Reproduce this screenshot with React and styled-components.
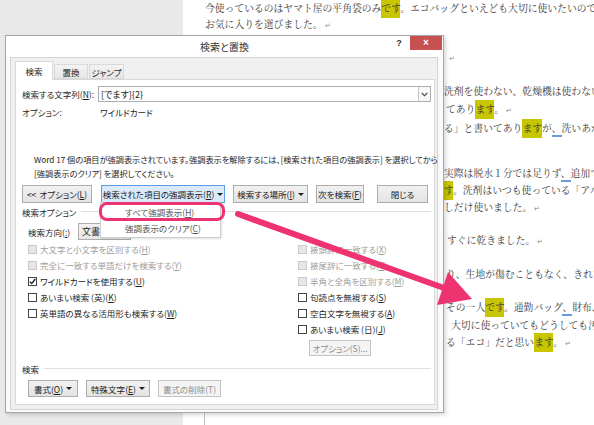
import React from "react";
import styled, { createGlobalStyle } from "styled-components";

const GlobalStyle = createGlobalStyle`
  html, body { margin: 0; padding: 0; width: 594px; height: 425px; overflow: hidden; }
  body { font-family: "Noto Sans CJK JP", "Noto Sans", sans-serif; }
  * { box-sizing: border-box; }
`;

const PINK = "#ee3470";

const Screen = styled.div`
  position: relative;
  width: 594px;
  height: 425px;
  overflow: hidden;
  display: flex;
  background: #e9e9e9;
`;

const Workspace = styled.div`
  width: 183px;
  flex-shrink: 0;
  background: #e9e9e9;
`;

const Page = styled.div`
  position: relative;
  flex: 1;
  min-width: 0;
  overflow: hidden;
  background: #fff;
  padding-left: 22px;
  font-family: "Noto Serif CJK JP", "Noto Sans CJK JP", serif;
  font-size: 9.8px;
  color: #3a3a3a;
  &::after {
    content: "";
    position: absolute;
    left: 21px;
    bottom: 0;
    height: 12px;
    border-left: 1px solid #c4c4c4;
  }
`;

const DocLine = styled.div`
  height: 16px;
  line-height: 16px;
  white-space: nowrap;
  margin-left: ${(p) => p.$indent || 0}px;
  margin-top: ${(p) => p.$gap || 0}px;
`;

const Mark = styled.span`
  background: #c8c600;
  color: #333;
  padding: 2px 0 3px;
`;

const Wavy = styled.span`
  border-bottom: 2px solid #6a9be0;
`;

const Para = styled.span`
  font-size: 7px;
  color: #8a8a8a;
  margin-left: 2px;
`;

const Dialog = styled.div`
  position: absolute;
  left: 5px;
  top: 35px;
  width: 439px;
  height: 378px;
  background: #fafafa;
  border: 1px solid #a6a6a6;
  box-shadow: 2px 2px 4px rgba(0, 0, 0, 0.16);
  display: flex;
  flex-direction: column;
  font-family: "Noto Sans CJK JP", sans-serif;
  font-size: 8.5px;
  font-feature-settings: "palt";
  color: #1e1e1e;
`;

const TitleBar = styled.div`
  height: 21px;
  display: grid;
  grid-template-columns: 1fr auto 1fr;
  background: #fff;
`;

const Title = styled.div`
  grid-column: 2;
  line-height: 21px;
  font-size: 10px;
  color: #333;
`;

const Controls = styled.div`
  justify-self: end;
  display: flex;
  align-items: flex-start;
  margin-right: 1px;
`;

const HelpButton = styled.div`
  width: 16px;
  height: 14px;
  margin-right: 3px;
  font-family: "Liberation Sans", sans-serif;
  font-weight: bold;
  font-size: 9px;
  line-height: 14px;
  text-align: center;
  color: #333;
`;

const CloseButton = styled.div`
  width: 32px;
  height: 14px;
  background: #c75050;
  color: #fff;
  font-family: "Liberation Sans", sans-serif;
  font-size: 10px;
  font-weight: bold;
  line-height: 13px;
  text-align: center;
`;

const Client = styled.div`
  flex: 1;
  margin: 0 5px 2px 4px;
  background: #f0f0f0;
  border: 1px solid #d4d4d4;
  padding: 3px 2px 4px 4px;
  display: flex;
  flex-direction: column;
`;

const TabRow = styled.div`
  display: flex;
  align-items: flex-end;
  gap: 1px;
  height: 18px;
  position: relative;
  z-index: 1;
`;

const Tab = styled.div`
  width: ${(p) => p.$w}px;
  height: ${(p) => (p.$active ? 19 : 15)}px;
  margin-bottom: ${(p) => (p.$active ? -1 : 0)}px;
  display: flex;
  align-items: center;
  justify-content: center;
  border: 1px solid #d9d9d9;
  border-bottom: ${(p) => (p.$active ? "none" : "1px solid #d9d9d9")};
  background: ${(p) => (p.$active ? "#fff" : "linear-gradient(#f3f3f3, #e6e6e6)")};
`;

const Panel = styled.div`
  flex: 1;
  background: #fff;
  border: 1px solid #d9d9d9;
  padding: 6px 3px 0 6px;
  display: flex;
  flex-direction: column;
`;

const FieldRow = styled.div`
  display: grid;
  grid-template-columns: 76px 1fr;
  align-items: center;
  height: ${(p) => p.$h}px;
  margin-top: ${(p) => p.$mt || 0}px;
`;

const Input = styled.div`
  height: 16px;
  border: 1px solid #abadb3;
  display: flex;
  align-items: center;
  justify-content: space-between;
  padding-left: 2px;
  font-size: 9px;
`;

const InputArrow = styled.div`
  width: 12px;
  height: 14px;
  border-left: 1px solid #c7c7c7;
  background: #f7f7f7;
  display: flex;
  align-items: center;
  justify-content: center;
`;

const FieldValue = styled.div`
  padding-left: 2px;
`;

const Message = styled.div`
  margin-top: 33px;
  padding-left: 12px;
  line-height: 14px;
  font-size: 8.2px;
  white-space: nowrap;
`;

const ButtonRow = styled.div`
  display: flex;
  align-items: center;
  margin-top: ${(p) => p.$mt || 0}px;
  padding-left: ${(p) => p.$pl || 0}px;
`;

const Button = styled.div`
  height: ${(p) => p.$h || 18}px;
  width: ${(p) => p.$w}px;
  margin-left: ${(p) => p.$ml || 0}px;
  display: flex;
  align-items: center;
  justify-content: center;
  gap: 3px;
  white-space: nowrap;
  color: ${(p) => (p.$disabled ? "#8d8d8d" : "#1a1a1a")};
  background: ${(p) =>
    p.$pressed ? "#dbeafa" : p.$disabled ? "#f4f4f4" : "linear-gradient(#f1f1f1, #e3e3e3)"};
  border: 1px solid ${(p) => (p.$pressed ? "#5a9de0" : p.$disabled ? "#c4c4c4" : "#adadad")};
`;

const Caret = styled.span`
  width: 0;
  height: 0;
  border-left: 3px solid transparent;
  border-right: 3px solid transparent;
  border-top: 3px solid #222;
`;

const Anchor = styled.div`
  position: relative;
  margin-left: ${(p) => p.$ml || 0}px;
  z-index: 3;
`;

const Menu = styled.div`
  position: absolute;
  left: -1px;
  top: calc(100% - 1px);
  width: 121px;
  padding: 1px 0;
  background: #fff;
  border: 1px solid #cdcdcd;
  box-shadow: 1px 1px 2px rgba(0, 0, 0, 0.12);
`;

const MenuItem = styled.div`
  height: 16px;
  line-height: 16px;
  padding-left: 24px;
  color: #555;
  white-space: nowrap;
`;

const Ring = styled.div`
  position: absolute;
  left: -2px;
  top: -1px;
  width: 126px;
  height: 19px;
  border: 3px solid ${PINK};
  border-radius: 8px;
`;

const SectionHeader = styled.div`
  display: flex;
  align-items: center;
  gap: 5px;
  height: 13px;
  margin-top: ${(p) => p.$mt || 0}px;
  &::after {
    content: "";
    flex: 1;
    border-top: 1px solid #e0e0e0;
  }
`;

const DirectionRow = styled.div`
  display: flex;
  align-items: center;
  height: 17px;
  margin-top: 5px;
  padding-left: 6px;
`;

const DirectionLabel = styled.div`
  width: 50px;
`;

const Select = styled.div`
  width: 53px;
  height: 17px;
  border: 1px solid #acacac;
  background: linear-gradient(#f2f2f2, #e6e6e6);
  padding-left: 3px;
  line-height: 15px;
  font-size: 9px;
`;

const CheckGrid = styled.div`
  display: grid;
  grid-template-columns: 270px 1fr;
  padding-left: 6px;
  margin-top: 1px;
`;

const CheckColumn = styled.div`
  display: flex;
  flex-direction: column;
`;

const CheckRow = styled.div`
  height: 16px;
  display: flex;
  align-items: center;
  gap: 3px;
  white-space: nowrap;
  color: ${(p) => (p.$disabled ? "#9c9c9c" : "#1e1e1e")};
`;

const Box = styled.span`
  width: 9px;
  height: 9px;
  flex-shrink: 0;
  border: 1px solid ${(p) => (p.$disabled ? "#c9c9c9" : "#444")};
  background: ${(p) => (p.$disabled ? "#e6e6e6" : "#fff")};
  display: flex;
  align-items: center;
  justify-content: center;
`;

const Arrow = styled.svg`
  position: absolute;
  left: 0;
  top: 0;
  pointer-events: none;
  z-index: 5;
`;

const U = styled.span`
  text-decoration: underline;
`;

const Check = ({ label, acc, disabled, checked }) => (
  <CheckRow $disabled={disabled}>
    <Box $disabled={disabled}>
      {checked && (
        <svg width="7" height="7" viewBox="0 0 7 7">
          <path d="M0.8 3.6 L2.7 5.6 L6.3 1" fill="none" stroke="#111" strokeWidth="1.3" />
        </svg>
      )}
    </Box>
    <span>
      {label}(<U>{acc}</U>)
    </span>
  </CheckRow>
);

const Acc = ({ text, acc, tail = "" }) => (
  <span>
    {text}(<U>{acc}</U>){tail}
  </span>
);

export default function App() {
  return (
    <>
      <GlobalStyle />
      <Screen>
        <Workspace />
        <Page>
          <DocLine>
            今使っているのはヤマト屋の平角袋のみ<Mark>です</Mark>。エコバッグといえども大切に使いたいので
          </DocLine>
          <DocLine>
            お気に入りを選びました。<Para>↵</Para>
          </DocLine>
          <DocLine $indent={242} $gap={17}>
            <Para>↵</Para>
          </DocLine>
          <DocLine $indent={239} $gap={18}>
            洗剤を使わない、乾燥機は使わない、
          </DocLine>
          <DocLine $indent={241} $gap={2}>
            てあり<Mark>ます</Mark>。<Para>↵</Para>
          </DocLine>
          <DocLine $indent={239} $gap={3}>
            る」と書いてあり<Mark>ます</Mark>が<Wavy>、</Wavy>洗いあが
          </DocLine>
          <DocLine $indent={239} $gap={29}>
            実際は脱水１分では足りず<Wavy>、</Wavy>追加て
          </DocLine>
          <DocLine $indent={239} $gap={1}>
            <Mark>す</Mark>。洗剤はいつも使っている「アル
          </DocLine>
          <DocLine $indent={239} $gap={1}>
            しだけ使いました。<Para>↵</Para>
          </DocLine>
          <DocLine $indent={242} $gap={17}>
            すぐに乾きました。<Para>↵</Para>
          </DocLine>
          <DocLine $indent={241} $gap={18}>
            り、生地が傷むこともなく、きれい
          </DocLine>
          <DocLine $indent={241} $gap={17}>
            その一人<Mark>です</Mark>。通勤バッグ<Wavy>、</Wavy>財布、
          </DocLine>
          <DocLine $indent={246} $gap={2}>
            大切に使っていてもどうしても汚
          </DocLine>
          <DocLine $indent={241} $gap={1}>
            る「エコ」だと思い<Mark>ます</Mark>。<Para>↵</Para>
          </DocLine>
        </Page>

        <Dialog>
          <TitleBar>
            <Title>検索と置換</Title>
            <Controls>
              <HelpButton>?</HelpButton>
              <CloseButton>×</CloseButton>
            </Controls>
          </TitleBar>
          <Client>
            <TabRow>
              <Tab $active $w={38}>検索</Tab>
              <Tab $w={34}>置換</Tab>
              <Tab $w={35}>ジャンプ</Tab>
            </TabRow>
            <Panel>
              <FieldRow $h={16}>
                <Acc text="検索する文字列" acc="N" tail=":" />
                <Input>
                  <span>[でます]{"{2}"}</span>
                  <InputArrow>
                    <svg width="7" height="5" viewBox="0 0 7 5">
                      <path d="M0.8 1 L3.5 3.8 L6.2 1" fill="none" stroke="#444" strokeWidth="1.1" />
                    </svg>
                  </InputArrow>
                </Input>
              </FieldRow>
              <FieldRow $h={14} $mt={3}>
                <span>オプション:</span>
                <FieldValue>ワイルドカード</FieldValue>
              </FieldRow>
              <Message>
                Word 17 個の項目が強調表示されています。強調表示を解除するには、[検索された項目の強調表示] を選択してから
                <br />
                [強調表示のクリア] を選択してください。
              </Message>
              <ButtonRow $mt={5}>
                <Button $w={70}>
                  {"<< "}
                  <Acc text="オプション" acc="L" />
                </Button>
                <Anchor $ml={9}>
                  <Button $w={124} $pressed>
                    <Acc text="検索された項目の強調表示" acc="R" />
                    <Caret />
                  </Button>
                  <Menu>
                    <MenuItem>
                      <Acc text="すべて強調表示" acc="H" />
                    </MenuItem>
                    <MenuItem>
                      <Acc text="強調表示のクリア" acc="C" />
                    </MenuItem>
                    <Ring />
                  </Menu>
                </Anchor>
                <Button $w={75} $ml={8}>
                  <Acc text="検索する場所" acc="I" />
                  <Caret />
                </Button>
                <Button $w={48} $ml={8}>
                  <Acc text="次を検索" acc="F" />
                </Button>
                <Button $w={51} $ml={13}>
                  閉じる
                </Button>
              </ButtonRow>
              <SectionHeader $mt={2}>検索オプション</SectionHeader>
              <DirectionRow>
                <DirectionLabel>
                  検索方向(<U>:</U>)
                </DirectionLabel>
                <Select>文書全体</Select>
              </DirectionRow>
              <CheckGrid>
                <CheckColumn>
                  <Check label="大文字と小文字を区別する" acc="H" disabled />
                  <Check label="完全に一致する単語だけを検索する" acc="Y" disabled />
                  <Check label="ワイルドカードを使用する" acc="U" checked />
                  <Check label="あいまい検索 (英)" acc="K" />
                  <Check label="英単語の異なる活用形も検索する" acc="W" />
                </CheckColumn>
                <CheckColumn>
                  <Check label="接頭辞に一致する" acc="X" disabled />
                  <Check label="接尾辞に一致する" acc="T" disabled />
                  <Check label="半角と全角を区別する" acc="M" disabled />
                  <Check label="句読点を無視する" acc="S" />
                  <Check label="空白文字を無視する" acc="A" />
                  <Check label="あいまい検索 (日)" acc="J" />
                  <ButtonRow $mt={3} $pl={11}>
                    <Button $w={62} $h={16} $disabled>
                      オプション(S)...
                    </Button>
                  </ButtonRow>
                </CheckColumn>
              </CheckGrid>
              <SectionHeader $mt={6}>検索</SectionHeader>
              <ButtonRow $mt={5} $pl={6}>
                <Button $w={50} $h={17}>
                  <Acc text="書式" acc="O" />
                  <Caret />
                </Button>
                <Button $w={64} $h={17} $ml={8}>
                  <Acc text="特殊文字" acc="E" />
                  <Caret />
                </Button>
                <Button $w={63} $h={17} $ml={8} $disabled>
                  書式の削除(T)
                </Button>
              </ButtonRow>
            </Panel>
          </Client>
        </Dialog>

        <Arrow width="594" height="425" viewBox="0 0 594 425">
          <line x1="238" y1="214" x2="444" y2="288" stroke={PINK} strokeWidth="6" strokeLinecap="round" />
          <polygon points="437,305 448,272 472,299" fill={PINK} />
        </Arrow>
      </Screen>
    </>
  );
}
